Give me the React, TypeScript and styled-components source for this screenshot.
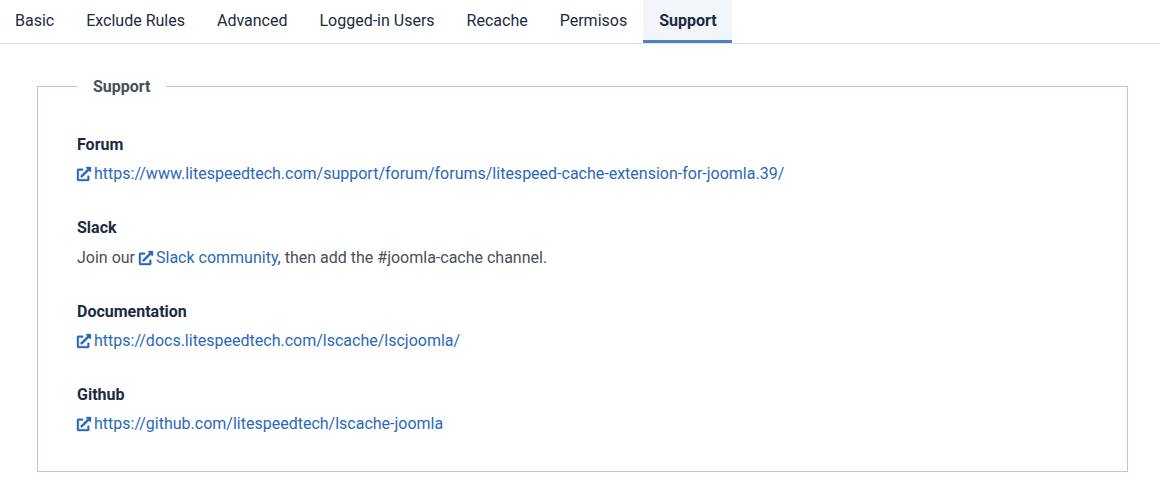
import { createGlobalStyle, styled } from "styled-components";
import { FaExternalLinkAlt } from "react-icons/fa";

const GlobalStyle = createGlobalStyle`
  html, body {
    margin: 0;
    background: #fff;
    font-family: Roboto, "Liberation Sans", sans-serif;
    font-size: 16px;
    line-height: 24px;
    color: #495057;
  }
`;

const TabBar = styled.ul`
  display: flex;
  margin: 0 0 0 -1px;
  padding: 0;
  list-style: none;
  height: 43px;
  border-bottom: 1px solid #dfe3e7;
`;

const Tab = styled.li<{ $active?: boolean }>`
  box-sizing: border-box;
  height: 43px;
  padding: 9px ${(p) => (p.$active ? "15px" : "16px")} 0 16px;
  color: #1c2b41;
  font-weight: ${(p) => (p.$active ? 700 : 400)};
  background: ${(p) => (p.$active ? "#f2f5f9" : "transparent")};
  border-bottom: 3px solid ${(p) => (p.$active ? "#4f81c3" : "transparent")};
`;

const Content = styled.div`
  padding: 31px 32px 0 37px;
`;

const Panel = styled.fieldset`
  box-sizing: border-box;
  width: 1091px;
  height: 397px;
  margin: 0;
  padding: 35px 39px 0;
  border: 1px solid #b4c7e2;
`;

const PanelTitle = styled.legend`
  margin-left: 0;
  padding: 0 15px 0 16px;
  line-height: 23px;
  font-weight: 700;
  color: #495057;
`;

const Section = styled.section`
  height: 83.3px;
`;

const SectionTitle = styled.div`
  font-weight: 700;
  color: #1c2b41;
  margin-bottom: 5.4px;
`;

const Link = styled.a`
  color: #2a69b8;
  text-decoration: none;
  svg {
    width: 14px;
    height: 14px;
    margin-right: 3px;
    vertical-align: -2px;
    stroke: currentColor;
    stroke-width: 14px;
    overflow: visible;
  }
`;

const ExternalLink = ({ text }: { text: string }) => (
  <Link href="#">
    <FaExternalLinkAlt />
    {text}
  </Link>
);

const tabs = ["Basic", "Exclude Rules", "Advanced", "Logged-in Users", "Recache", "Permisos", "Support"];

export default function App() {
  return (
    <>
      <GlobalStyle />
      <TabBar>
        {tabs.map((t) => (
          <Tab key={t} $active={t === "Support"}>
            {t}
          </Tab>
        ))}
      </TabBar>
      <Content>
        <Panel>
          <PanelTitle>Support</PanelTitle>
          <Section>
            <SectionTitle>Forum</SectionTitle>
            <ExternalLink text="https://www.litespeedtech.com/support/forum/forums/litespeed-cache-extension-for-joomla.39/" />
          </Section>
          <Section>
            <SectionTitle>Slack</SectionTitle>
            Join our <ExternalLink text="Slack community" />, then add the #joomla-cache channel.
          </Section>
          <Section>
            <SectionTitle>Documentation</SectionTitle>
            <ExternalLink text="https://docs.litespeedtech.com/lscache/lscjoomla/" />
          </Section>
          <Section>
            <SectionTitle>Github</SectionTitle>
            <ExternalLink text="https://github.com/litespeedtech/lscache-joomla" />
          </Section>
        </Panel>
      </Content>
    </>
  );
}
